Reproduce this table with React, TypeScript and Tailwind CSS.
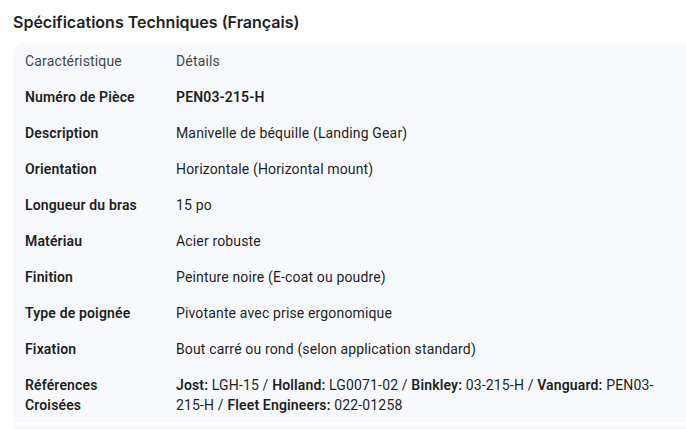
import React from 'react';

const rows: { label: string; value: React.ReactNode; bold?: boolean }[] = [
  { label: 'Numéro de Pièce', value: 'PEN03-215-H', bold: true },
  { label: 'Description', value: 'Manivelle de béquille (Landing Gear)' },
  { label: 'Orientation', value: 'Horizontale (Horizontal mount)' },
  { label: 'Longueur du bras', value: '15 po' },
  { label: 'Matériau', value: 'Acier robuste' },
  { label: 'Finition', value: 'Peinture noire (E-coat ou poudre)' },
  { label: 'Type de poignée', value: 'Pivotante avec prise ergonomique' },
  { label: 'Fixation', value: 'Bout carré ou rond (selon application standard)' },
  {
    label: 'Références Croisées',
    value: (
      <>
        <b className="font-semibold">Jost:</b> LGH-15 / <b className="font-semibold">Holland:</b> LG0071-02 /{' '}
        <b className="font-semibold">Binkley:</b> 03-215-H / <b className="font-semibold">Vanguard:</b> PEN03-215-H /{' '}
        <b className="font-semibold">Fleet Engineers:</b> 022-01258
      </>
    ),
  },
];

export default function App() {
  return (
    <div className="w-[686px] h-[429px] overflow-hidden bg-white font-['Roboto',sans-serif] text-[#1f1f1f]">
      <h2 className="pl-[13px] pt-[12px] h-[43px] font-['Inter',sans-serif] text-[16px] font-semibold leading-[20px]">
        Spécifications Techniques (Français)
      </h2>
      <div className="ml-[13px] w-[673px] rounded-tl-[12px] bg-[#f8f9fc]">
        <table className="w-full border-collapse text-[14px] leading-[20px] tracking-[0.15px]">
          <thead>
            <tr className="text-[#444746]">
              <th className="w-[151px] px-3 py-2 text-left font-normal">Caractéristique</th>
              <th className="px-3 py-2 text-left font-normal">Détails</th>
            </tr>
          </thead>
          <tbody>
            {rows.map((r) => (
              <tr key={r.label}>
                <td className="px-3 py-2 align-top font-semibold">{r.label}</td>
                <td className={`pl-3 pr-4 py-2 align-top ${r.bold ? 'font-semibold' : 'font-normal'}`}>{r.value}</td>
              </tr>
            ))}
          </tbody>
        </table>
      </div>
      <div className="ml-[13px] mt-[3px] h-[10px] bg-[#f8f9fc]" />
    </div>
  );
}
